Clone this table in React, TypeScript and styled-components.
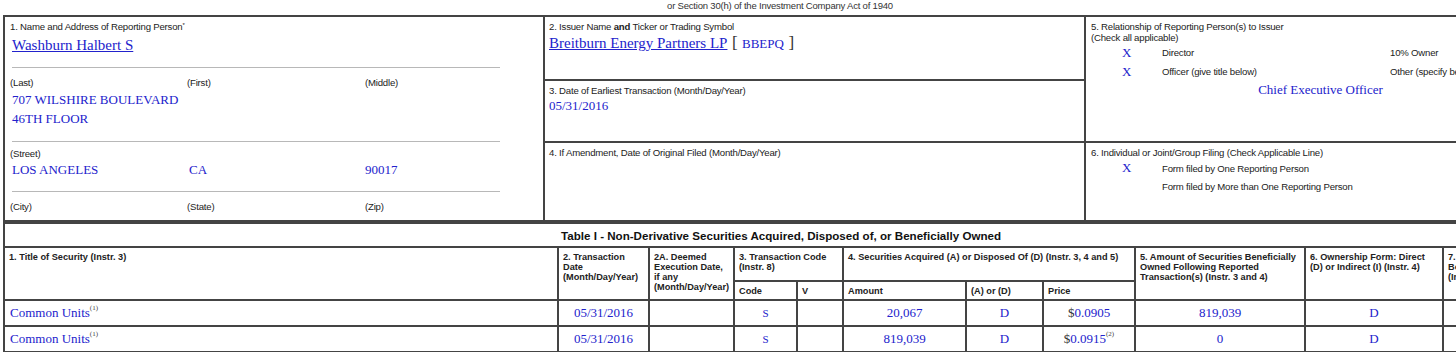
import React from 'react';
import styled, { createGlobalStyle } from 'styled-components';

const GlobalStyle = createGlobalStyle`
  html, body {
    margin: 0;
    padding: 0;
    background: #fff;
    overflow: hidden;
  }
`;

const Page = styled.div`
  width: 1554px;
  padding-left: 3px;
  font-family: 'Liberation Sans', Arial, sans-serif;
  color: #222;
`;

const Caption = styled.div`
  height: 15px;
  font-size: 9.5px;
  line-height: 12px;
  letter-spacing: -0.2px;
  text-align: center;
  color: #333;
`;

const TopGrid = styled.div`
  display: grid;
  grid-template-columns: 540px 541px 1fr;
  grid-template-rows: 64px 62px 77px;
  border: 2px solid #444;
`;

const NameCell = styled.div`
  grid-column: 1;
  grid-row: 1 / 4;
  border-right: 2px solid #444;
  display: flex;
  flex-direction: column;
`;

const Cell = styled.div<{ $col: number; $row: string; $bottom?: boolean; $right?: boolean }>`
  grid-column: ${({ $col }) => $col};
  grid-row: ${({ $row }) => $row};
  border-bottom: ${({ $bottom }) => ($bottom ? '2px solid #444' : 'none')};
  border-right: ${({ $right }) => ($right ? '2px solid #444' : 'none')};
  padding: 4px 5px 0 4px;
`;

const Label = styled.div`
  font-size: 9.6px;
  line-height: 12px;
  letter-spacing: -0.2px;
  color: #222;
  white-space: nowrap;
`;

const Sup = styled.sup`
  font-size: 6px;
  vertical-align: top;
  position: relative;
  top: -2px;
`;

const BigLink = styled.a`
  font-family: 'Liberation Serif', 'Times New Roman', serif;
  font-size: 15px;
  line-height: 18px;
  color: #2222cc;
  text-decoration: underline;
`;

const NameLink = styled(BigLink)`
  display: inline-block;
  margin: 3px 0 0 2px;
`;

const Value = styled.div<{ $indent?: boolean }>`
  font-family: 'Liberation Serif', 'Times New Roman', serif;
  font-size: 13px;
  line-height: 19px;
  color: #2222cc;
  white-space: nowrap;
  margin-left: ${({ $indent }) => ($indent ? '2px' : '0')};
`;

const Bracket = styled.span`
  font-family: 'Liberation Serif', 'Times New Roman', serif;
  font-size: 17px;
  color: #333;
`;

const Ticker = styled.span`
  font-family: 'Liberation Serif', 'Times New Roman', serif;
  font-size: 13px;
  color: #2222cc;
`;

const Section = styled.div<{ $h: number; $pt: number }>`
  height: ${({ $h }) => $h}px;
  padding: ${({ $pt }) => $pt}px 5px 0;
  box-sizing: border-box;
`;

const Rule = styled.div`
  height: 1px;
  background: #b8b8b8;
  margin: 0 43px 0 7px;
`;

const Triple = styled.div`
  display: grid;
  grid-template-columns: 177px 178px 1fr;
`;

const CheckRow = styled.div<{ $h: number }>`
  display: grid;
  grid-template-columns: 31px 40px 228px 1fr;
  align-items: center;
  height: ${({ $h }) => $h}px;
`;

const Mark = styled.span`
  grid-column: 2;
  font-family: 'Liberation Serif', 'Times New Roman', serif;
  font-size: 13px;
  color: #2222cc;
`;

const CheckText = styled.span<{ $col: number }>`
  grid-column: ${({ $col }) => $col};
  font-size: 9.6px;
  letter-spacing: -0.2px;
  white-space: nowrap;
`;

const Title = styled.div`
  font-family: 'Liberation Serif', 'Times New Roman', serif;
  font-size: 13px;
  color: #2222cc;
  text-align: center;
  margin-top: 1px;
`;

const Table = styled.table`
  width: 1554px;
  table-layout: fixed;
  border-collapse: collapse;
  border: 2px solid #444;
  td, th {
    border: 2px solid #444;
  }
`;

const TitleCell = styled.th`
  height: 22px;
  padding: 0;
  font-size: 11.6px;
  font-weight: bold;
  text-align: center;
  color: #111;
`;

const Head = styled.th<{ $h?: number }>`
  height: ${({ $h }) => $h ?? 28}px;
  padding: 4px 4px 0;
  font-size: 9.2px;
  line-height: 10px;
  font-weight: bold;
  text-align: left;
  vertical-align: top;
  color: #222;
  overflow: hidden;
`;

const Data = styled.td<{ $left?: boolean }>`
  height: 24px;
  padding: 0 5px;
  font-family: 'Liberation Serif', 'Times New Roman', serif;
  font-size: 13px;
  color: #2222cc;
  text-align: ${({ $left }) => ($left ? 'left' : 'center')};
  vertical-align: middle;
  white-space: nowrap;
`;

const Note = styled.sup`
  font-size: 7px;
  color: #444;
  vertical-align: top;
  position: relative;
  top: -1px;
`;

const Dollar = styled.span`
  color: #333;
`;

const colWidths = [554, 91, 85, 63, 46, 123, 77, 92, 170, 138, 115];

const rows = [
  { date: '05/31/2016', amount: '20,067', price: '0.0905', note: '', owned: '819,039' },
  { date: '05/31/2016', amount: '819,039', price: '0.0915', note: '(2)', owned: '0' },
];

export default function App() {
  return (
    <Page>
      <GlobalStyle />
      <Caption>or Section 30(h) of the Investment Company Act of 1940</Caption>
      <TopGrid>
        <NameCell>
          <Section $h={50} $pt={4}>
            <Label>
              1. Name and Address of Reporting Person<Sup>*</Sup>
            </Label>
            <NameLink href="#">Washburn Halbert S</NameLink>
          </Section>
          <Rule />
          <Section $h={74} $pt={9}>
            <Triple>
              <Label>(Last)</Label>
              <Label>(First)</Label>
              <Label>(Middle)</Label>
            </Triple>
            <Value $indent style={{ marginTop: 1 }}>
              707 WILSHIRE BOULEVARD
            </Value>
            <Value $indent>46TH FLOOR</Value>
          </Section>
          <Rule />
          <Section $h={49} $pt={6}>
            <Label>(Street)</Label>
            <Triple>
              <Value $indent>LOS ANGELES</Value>
              <Value $indent>CA</Value>
              <Value>90017</Value>
            </Triple>
          </Section>
          <Rule />
          <Section $h={28} $pt={9}>
            <Triple>
              <Label>(City)</Label>
              <Label>(State)</Label>
              <Label>(Zip)</Label>
            </Triple>
          </Section>
        </NameCell>

        <Cell $col={2} $row="1" $bottom $right>
          <Label>
            2. Issuer Name <b style={{ fontWeight: 600 }}>and</b> Ticker or Trading Symbol
          </Label>
          <div>
            <BigLink href="#">Breitburn Energy Partners LP</BigLink> <Bracket>[</Bracket>{' '}
            <Ticker>BBEPQ</Ticker> <Bracket>]</Bracket>
          </div>
        </Cell>
        <Cell $col={2} $row="2" $bottom $right>
          <Label>3. Date of Earliest Transaction (Month/Day/Year)</Label>
          <Value style={{ marginTop: -1 }}>05/31/2016</Value>
        </Cell>
        <Cell $col={2} $row="3" $right>
          <Label>4. If Amendment, Date of Original Filed (Month/Day/Year)</Label>
        </Cell>

        <Cell $col={3} $row="1 / 3" $bottom style={{ paddingLeft: 5 }}>
          <Label style={{ lineHeight: '11px' }}>
            5. Relationship of Reporting Person(s) to Issuer
            <br />
            (Check all applicable)
          </Label>
          <CheckRow $h={19}>
            <Mark>X</Mark>
            <CheckText $col={3}>Director</CheckText>
            <CheckText $col={4}>10% Owner</CheckText>
          </CheckRow>
          <CheckRow $h={19}>
            <Mark>X</Mark>
            <CheckText $col={3}>Officer (give title below)</CheckText>
            <CheckText $col={4}>Other (specify below)</CheckText>
          </CheckRow>
          <Title>Chief Executive Officer</Title>
        </Cell>
        <Cell $col={3} $row="3" style={{ paddingLeft: 5 }}>
          <Label>6. Individual or Joint/Group Filing (Check Applicable Line)</Label>
          <CheckRow $h={18}>
            <Mark>X</Mark>
            <CheckText $col={3}>Form filed by One Reporting Person</CheckText>
          </CheckRow>
          <CheckRow $h={18}>
            <CheckText $col={3}>Form filed by More than One Reporting Person</CheckText>
          </CheckRow>
        </Cell>
      </TopGrid>

      <Table>
        <colgroup>
          {colWidths.map((w, i) => (
            <col key={i} style={{ width: w }} />
          ))}
        </colgroup>
        <thead>
          <tr>
            <TitleCell colSpan={11}>
              Table I - Non-Derivative Securities Acquired, Disposed of, or Beneficially Owned
            </TitleCell>
          </tr>
          <tr>
            <Head rowSpan={2}>1. Title of Security (Instr. 3)</Head>
            <Head rowSpan={2}>2. Transaction Date (Month/Day/Year)</Head>
            <Head rowSpan={2}>2A. Deemed Execution Date, if any (Month/Day/Year)</Head>
            <Head colSpan={2}>3. Transaction Code (Instr. 8)</Head>
            <Head colSpan={3}>4. Securities Acquired (A) or Disposed Of (D) (Instr. 3, 4 and 5)</Head>
            <Head rowSpan={2}>
              5. Amount of Securities Beneficially Owned Following Reported Transaction(s) (Instr. 3
              and 4)
            </Head>
            <Head rowSpan={2}>6. Ownership Form: Direct (D) or Indirect (I) (Instr. 4)</Head>
            <Head rowSpan={2}>7. Nature of Indirect Beneficial Ownership (Instr. 4)</Head>
          </tr>
          <tr>
            <Head $h={13}>Code</Head>
            <Head $h={13}>V</Head>
            <Head $h={13}>Amount</Head>
            <Head $h={13}>(A) or (D)</Head>
            <Head $h={13}>Price</Head>
          </tr>
        </thead>
        <tbody>
          {rows.map((r, i) => (
            <tr key={i}>
              <Data $left>
                Common Units<Note>(1)</Note>
              </Data>
              <Data>{r.date}</Data>
              <Data />
              <Data style={{ fontSize: 11 }}>S</Data>
              <Data />
              <Data>{r.amount}</Data>
              <Data>D</Data>
              <Data>
                <Dollar>$</Dollar>
                {r.price}
                {r.note && <Note>{r.note}</Note>}
              </Data>
              <Data>{r.owned}</Data>
              <Data>D</Data>
              <Data />
            </tr>
          ))}
        </tbody>
      </Table>
    </Page>
  );
}
